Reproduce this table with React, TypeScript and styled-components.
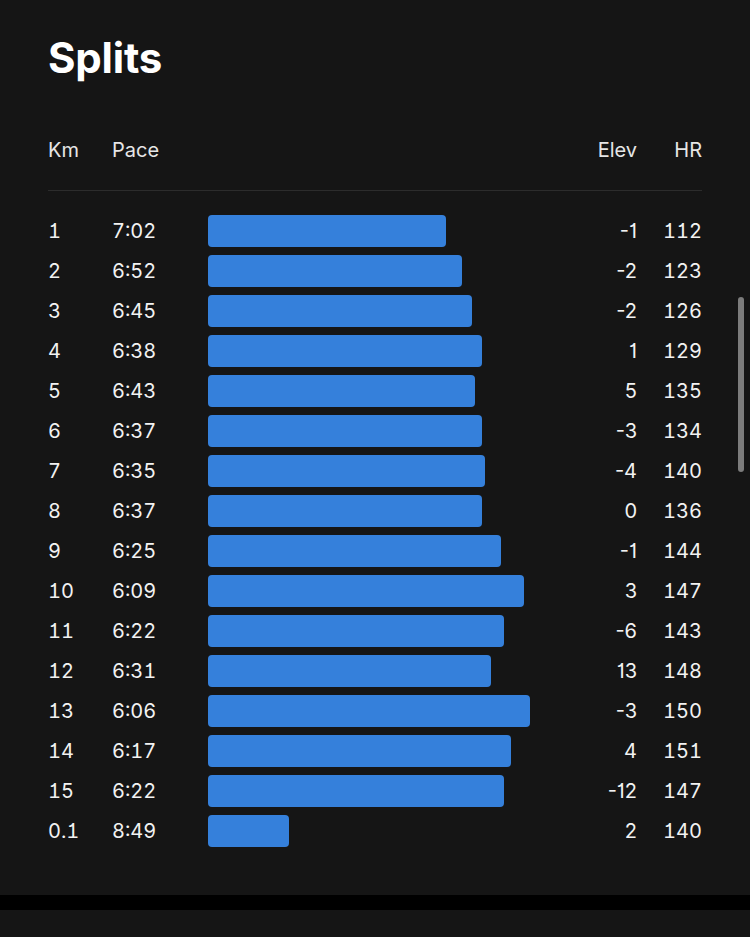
import styled, { createGlobalStyle } from "styled-components";

const GlobalStyle = createGlobalStyle`
  html, body {
    margin: 0;
    padding: 0;
    background: #151515;
  }
  body {
    font-family: Inter, "Noto Sans", "Liberation Sans", sans-serif;
    color: #f2f2f2;
  }
`;

const Screen = styled.div`
  position: relative;
  width: 750px;
  height: 937px;
  overflow: hidden;
  display: flex;
  flex-direction: column;
  background: #151515;
`;

const Panel = styled.section`
  height: 895px;
  padding: 0 48px;
  box-sizing: border-box;
`;

const Title = styled.h1`
  margin: 0;
  padding-top: 34px;
  font-size: 42px;
  line-height: 48px;
  font-weight: 700;
  letter-spacing: -0.2px;
  color: #ffffff;
`;

const Table = styled.div`
  margin-top: 48px;
`;

const Row = styled.div<{ $head?: boolean }>`
  display: grid;
  grid-template-columns: 64px 96px 1fr 80px 65px;
  align-items: center;
  height: 40px;
  font-size: 20px;
  font-weight: 400;
  font-feature-settings: "tnum", "cv01";
  color: ${(p) => (p.$head ? "#e6e6e6" : "#f2f2f2")};
`;

const Divider = styled.div`
  height: 1px;
  background: #2c2c2c;
  margin: 20px 0 20px;
`;

const Cell = styled.span<{ $right?: boolean; $proportional?: boolean }>`
  text-align: ${(p) => (p.$right ? "right" : "left")};
  white-space: nowrap;
  ${(p) => (p.$proportional ? `font-feature-settings: "cv01";` : "")}
`;

const Bar = styled.div`
  height: 32px;
  border-radius: 4px;
  background: #3580db;
`;

const Separator = styled.div`
  height: 15px;
  background: #000000;
`;

const Scrollbar = styled.div`
  position: absolute;
  left: 738px;
  top: 297px;
  width: 6px;
  height: 175px;
  border-radius: 3px;
  background: #7c7c7c;
`;

const splits = [
  { km: "1", pace: "7:02", bar: 238, elev: "-1", hr: "112" },
  { km: "2", pace: "6:52", bar: 254, elev: "-2", hr: "123" },
  { km: "3", pace: "6:45", bar: 264, elev: "-2", hr: "126" },
  { km: "4", pace: "6:38", bar: 274, elev: "1", hr: "129" },
  { km: "5", pace: "6:43", bar: 267, elev: "5", hr: "135" },
  { km: "6", pace: "6:37", bar: 274, elev: "-3", hr: "134" },
  { km: "7", pace: "6:35", bar: 277, elev: "-4", hr: "140" },
  { km: "8", pace: "6:37", bar: 274, elev: "0", hr: "136" },
  { km: "9", pace: "6:25", bar: 293, elev: "-1", hr: "144" },
  { km: "10", pace: "6:09", bar: 316, elev: "3", hr: "147" },
  { km: "11", pace: "6:22", bar: 296, elev: "-6", hr: "143" },
  { km: "12", pace: "6:31", bar: 283, elev: "13", hr: "148" },
  { km: "13", pace: "6:06", bar: 322, elev: "-3", hr: "150" },
  { km: "14", pace: "6:17", bar: 303, elev: "4", hr: "151" },
  { km: "15", pace: "6:22", bar: 296, elev: "-12", hr: "147" },
  { km: "0.1", pace: "8:49", bar: 81, elev: "2", hr: "140" },
];

export default function App() {
  return (
    <>
      <GlobalStyle />
      <Screen>
        <Panel>
          <Title>Splits</Title>
          <Table>
            <Row $head>
              <Cell>Km</Cell>
              <Cell>Pace</Cell>
              <span />
              <Cell $right>Elev</Cell>
              <Cell $right>HR</Cell>
            </Row>
            <Divider />
            {splits.map((s) => (
              <Row key={s.km}>
                <Cell>{s.km}</Cell>
                <Cell>{s.pace}</Cell>
                <Bar style={{ width: s.bar }} />
                <Cell $right $proportional>
                  {s.elev}
                </Cell>
                <Cell $right>{s.hr}</Cell>
              </Row>
            ))}
          </Table>
        </Panel>
        <Separator />
        <Scrollbar />
      </Screen>
    </>
  );
}
